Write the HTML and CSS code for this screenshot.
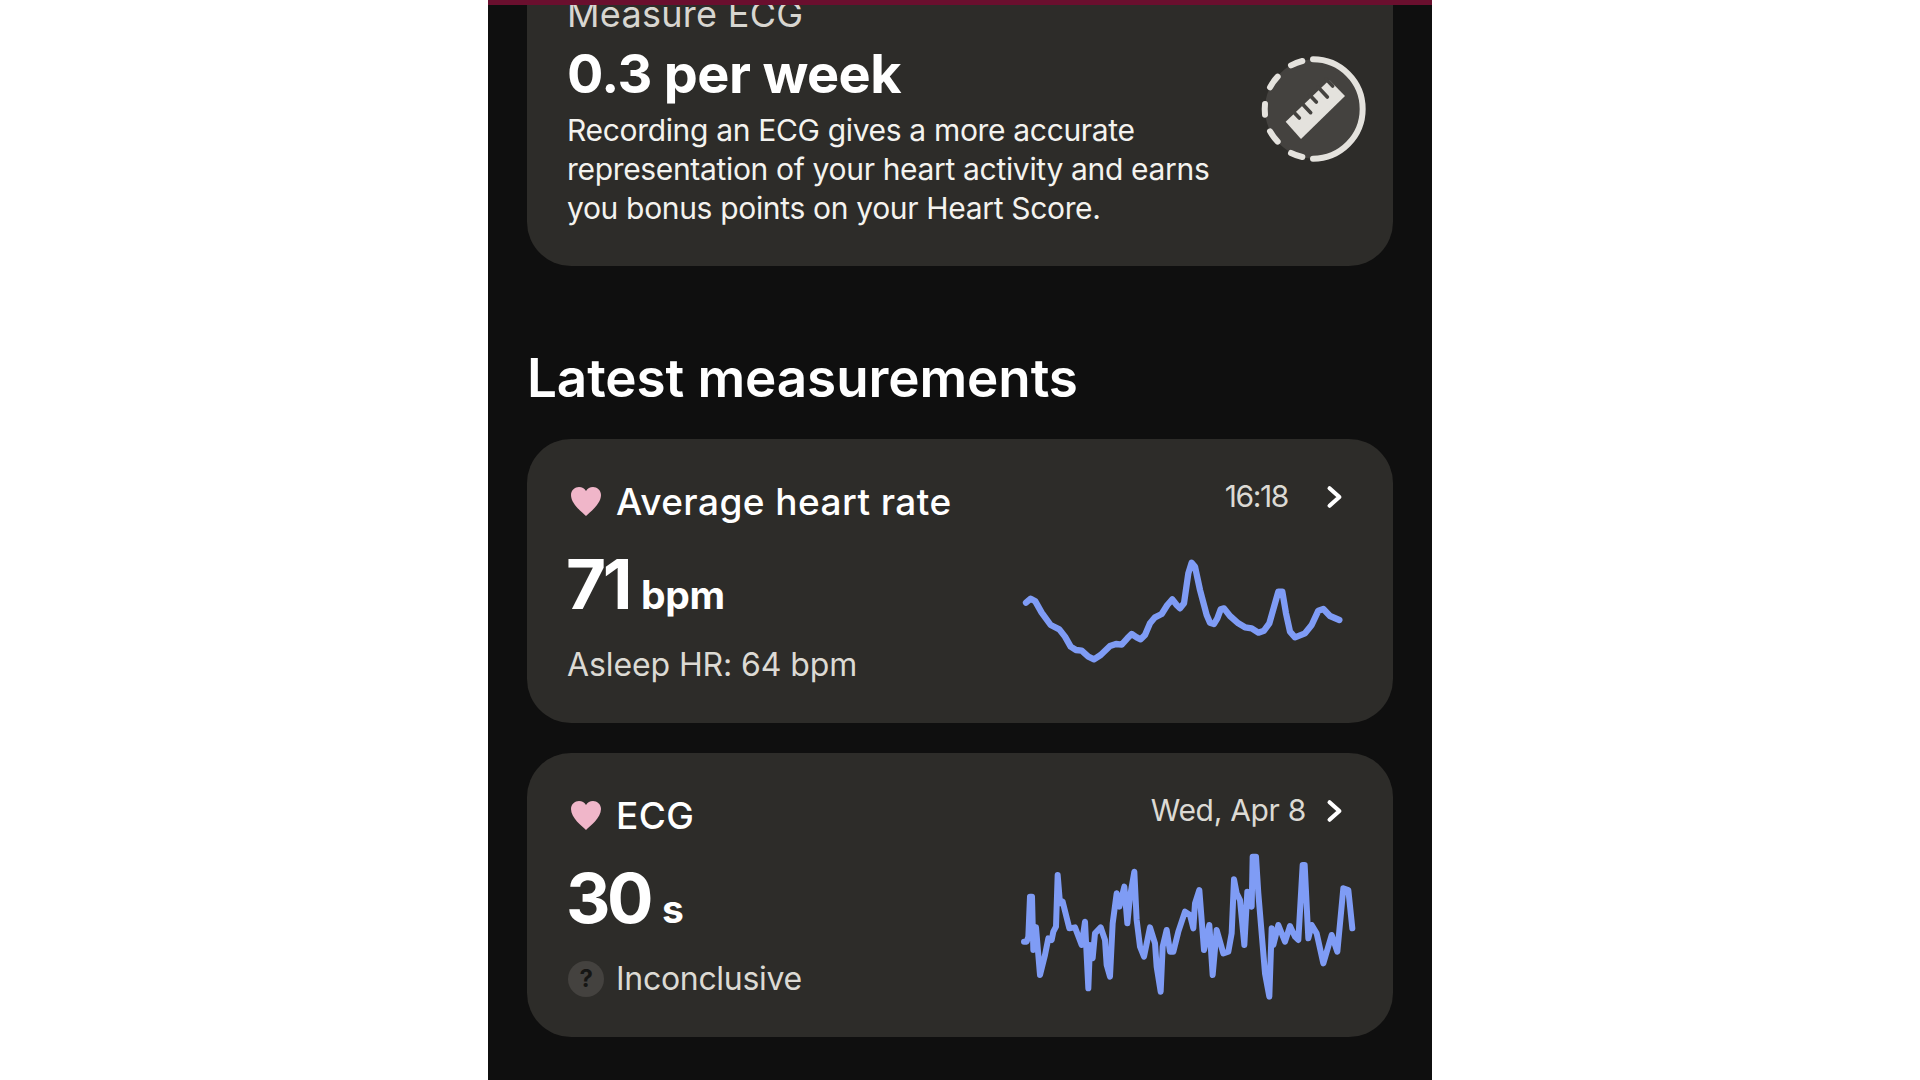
FILE: index.html
```html
<!DOCTYPE html>
<html lang="en">

<head>
    <meta charset="UTF-8">
    <title>Heart</title>
    <link rel="stylesheet" href="styles.css">
</head>

<body>
    <div class="phone">
        <div class="topbar"></div>

        <div class="card tip">
            <div class="tip-text">
                <p class="tip-label">Measure ECG</p>
                <p class="tip-title">0.3 per week</p>
                <p class="tip-body">Recording an ECG gives a more accurate representation of your heart activity and earns you bonus points on your Heart Score.</p>
            </div>
            <svg class="tip-icon" viewBox="0 0 480 390">
                <circle cx="224" cy="207" r="149" fill="#44423f" />
                <g fill="none" stroke="#e4e2dd" stroke-width="18" stroke-linecap="round">
                    <path d="M219 58 A149 149 0 0 1 219 356" />
                    <path d="M153 76 A149 149 0 0 1 187 63" />
                    <path d="M90 142 A149 149 0 0 1 113 110" />
                    <path d="M75 192 A149 149 0 0 0 75 224" />
                    <path d="M90 274 A149 149 0 0 0 113 305" />
                    <path d="M153 339 A149 149 0 0 0 187 351" />
                </g>
                <polygon points="137,245 268,120 315,168 183,297" fill="#e4e2dd" />
                <g stroke="#44423f" stroke-width="11" stroke-linecap="round">
                    <path d="M158 213 L178 234" />
                    <path d="M184 188 L212 218" />
                    <path d="M209 165 L229 186" />
                    <path d="M234 141 L262 171" />
                    <path d="M258 117 L278 138" />
                </g>
            </svg>
        </div>

        <h2 class="section-title">Latest measurements</h2>

        <div class="card reading">
            <div class="reading-left">
                <div class="reading-head">
                    <svg class="heart" viewBox="0 0 30 29">
                        <path d="M15 29 C11 25 0 17 0 8 C0 3 4 0 8 0 C11 0 13.500 1.500 15 4 C16.500 1.500 19 0 22 0 C26 0 30 3 30 8 C30 17 19 25 15 29 Z" />
                    </svg>
                    <span>Average heart rate</span>
                </div>
                <p class="value">71<span class="unit">bpm</span></p>
                <p class="note">Asleep HR: 64 bpm</p>
            </div>
            <div class="reading-right">
                <div class="meta meta-time">
                    <span>16:18</span>
                    <svg class="chevron" viewBox="0 0 16 22">
                        <path d="M3 3 L12 11 L3 19" />
                    </svg>
                </div>
                <svg class="chart" viewBox="0 0 1050 420">
                    <polyline points="48,188 62,176 76,184 95,218 122,255 148,268 165,290 182,320 198,330 215,332 235,350 252,358 272,345 300,318 318,312 335,314 352,295 365,282 380,292 392,298 405,285 420,250 435,232 455,222 472,195 487,178 500,195 510,205 522,190 535,100 545,68 555,80 570,150 590,225 600,248 612,252 622,235 632,208 642,205 660,228 685,250 705,262 725,265 745,278 762,272 778,250 795,190 805,155 817,155 828,220 840,275 855,292 885,280 905,255 925,212 940,207 960,228 988,240" />
                </svg>
            </div>
        </div>

        <div class="card reading">
            <div class="reading-left">
                <div class="reading-head">
                    <svg class="heart" viewBox="0 0 30 29">
                        <path d="M15 29 C11 25 0 17 0 8 C0 3 4 0 8 0 C11 0 13.500 1.500 15 4 C16.500 1.500 19 0 22 0 C26 0 30 3 30 8 C30 17 19 25 15 29 Z" />
                    </svg>
                    <span>ECG</span>
                </div>
                <p class="value">30<span class="unit">s</span></p>
                <div class="note note-icon">
                    <span class="question">?</span>
                    <span>Inconclusive</span>
                </div>
            </div>
            <div class="reading-right">
                <div class="meta">
                    <span>Wed, Apr 8</span>
                    <svg class="chevron" viewBox="0 0 16 22">
                        <path d="M3 3 L12 11 L3 19" />
                    </svg>
                </div>
                <svg class="chart chart-ecg" viewBox="0 42 1050 420">
                    <polyline points="42,305 50,305 55,290 60,170 66,170 70,330 78,262 90,405 105,345 115,295 125,300 130,275 138,260 143,105 150,190 158,185 178,265 195,262 215,315 225,245 235,445 240,315 248,355 255,280 272,262 285,300 290,375 300,410 308,250 320,160 328,200 343,140 352,250 360,170 373,95 380,240 390,320 402,350 420,262 435,310 440,380 452,455 458,320 470,270 480,335 490,335 505,275 525,215 540,225 550,265 555,190 568,150 582,330 598,255 608,405 620,270 640,340 655,335 665,280 672,118 680,160 690,180 703,315 712,155 725,200 728,50 738,50 745,160 765,400 778,470 785,265 790,315 805,255 825,305 840,258 855,290 865,300 878,75 884,75 895,295 905,255 920,280 940,370 965,285 982,335 1000,145 1015,150 1027,265" />
                </svg>
            </div>
        </div>
    </div>
</body>

</html>
```

FILE: styles.css
```css
html,
body {
    margin: 0;
    background: #fff;
}

p,
h2 {
    margin: 0;
}

.phone {
    width: 944px;
    height: 1080px;
    margin: 0 auto;
    padding: 0 39px;
    box-sizing: border-box;
    position: relative;
    overflow: hidden;
    background: #0f0f0f;
    color: #fff;
    font-family: Inter, "Liberation Sans", sans-serif;
}

.topbar {
    position: absolute;
    top: 0;
    left: 0;
    right: 0;
    height: 5px;
    background: #6a0f2e;
}

.card {
    background: #2d2c29;
    border-radius: 44px;
}

.tip {
    display: flex;
    margin-top: -40px;
    padding: 34px 33px 38px 40px;
    border-radius: 0 0 44px 44px;
}

.tip-label {
    font-size: 36px;
    line-height: 40px;
    letter-spacing: 0.3px;
    color: #d8d6d0;
}

.tip-title {
    margin-top: 7px;
    font-size: 54px;
    line-height: 66px;
    font-weight: 700;
    letter-spacing: -0.6px;
}

.tip-body {
    width: 660px;
    margin-top: 4px;
    font-size: 30px;
    line-height: 39px;
    letter-spacing: -0.33px;
    color: #f4f3ef;
}

.tip-icon {
    flex: none;
    width: 160px;
    height: 130px;
    margin: 46px -40px 0 13px;
}

.section-title {
    margin: 80px 0 29px;
    font-size: 53px;
    line-height: 64px;
    font-weight: 600;
    letter-spacing: -0.1px;
}

.reading {
    display: flex;
    justify-content: space-between;
    margin-bottom: 30px;
    padding: 37px 33px 38px 40px;
}

.reading-left {
    padding-top: 5px;
}

.reading-head {
    display: flex;
    align-items: center;
    gap: 15px;
    height: 40px;
    font-size: 37px;
    font-weight: 500;
    letter-spacing: 0.45px;
}

.heart {
    width: 30px;
    height: 29px;
    margin-left: 4px;
    fill: #f0b6c9;
}

.value {
    margin: 23px 0 0 -1px;
    font-size: 69px;
    line-height: 80px;
    font-weight: 700;
    letter-spacing: -3.5px;
}

.unit {
    margin-left: 12px;
    font-size: 39px;
    line-height: 1;
    letter-spacing: -0.3px;
}

.note {
    margin-top: 21px;
    font-size: 32px;
    line-height: 40px;
    letter-spacing: -0.1px;
    color: #dcdad4;
}

.note-icon {
    display: flex;
    align-items: center;
    gap: 12px;
    letter-spacing: -0.3px;
}

.question {
    width: 36px;
    height: 36px;
    margin-left: 1px;
    border-radius: 50%;
    background: #44423f;
    color: #161614;
    font-size: 24px;
    line-height: 36px;
    font-weight: 700;
    text-align: center;
}

.meta {
    display: flex;
    justify-content: flex-end;
    align-items: center;
    gap: 22px;
    height: 40px;
    padding-right: 17px;
    font-size: 30px;
    letter-spacing: -0.3px;
    color: #dcdad4;
}

.meta-time {
    gap: 40px;
    letter-spacing: -1.4px;
}

.chevron {
    width: 18px;
    height: 24px;
    margin: 2px -1px 0 -2px;
    fill: none;
    stroke: #fff;
    stroke-width: 3.8;
    stroke-linecap: round;
    stroke-linejoin: round;
}

.chart {
    display: block;
    width: 350px;
    height: 140px;
    margin-top: 24px;
    overflow: visible;
    fill: none;
    stroke: #7f9cf5;
    stroke-width: 19;
    stroke-linecap: round;
    stroke-linejoin: round;
}

.chart-ecg {
    stroke-width: 18;
}
```
